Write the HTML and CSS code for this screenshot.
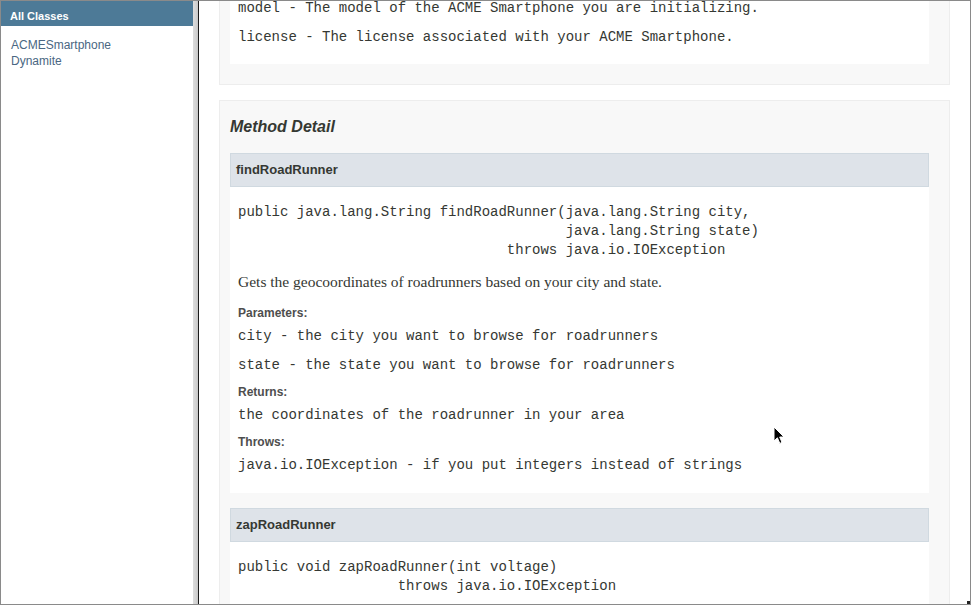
FILE: index.html
```html
<!DOCTYPE html>
<html lang="en">
<head>
<meta charset="utf-8">
<title>ACMESmartphone</title>
<link rel="stylesheet" href="styles.css">
</head>
<body>
<div class="window">
  <aside class="sidebar">
    <h1 class="bar">All Classes</h1>
    <ul class="classlist">
      <li><a href="#">ACMESmartphone</a></li>
      <li><a href="#">Dynamite</a></li>
    </ul>
  </aside>
  <div class="divider"></div>
  <main class="content">
    <section class="block block-cut">
      <div class="inner inner-cut">
        <dl class="params">
          <dd class="first">model - The model of the ACME Smartphone you are initializing.</dd>
          <dd>license - The license associated with your ACME Smartphone.</dd>
        </dl>
      </div>
    </section>
    <section class="block">
      <h3 class="section-title">Method Detail</h3>
      <div class="inner">
        <h4 class="member">findRoadRunner</h4>
        <pre class="sig">public java.lang.String findRoadRunner(java.lang.String city,
                                       java.lang.String state)
                                throws java.io.IOException</pre>
        <div class="desc">Gets the geocoordinates of roadrunners based on your city and state.</div>
        <dl class="params">
          <dt>Parameters:</dt>
          <dd>city - the city you want to browse for roadrunners</dd>
          <dd>state - the state you want to browse for roadrunners</dd>
          <dt>Returns:</dt>
          <dd>the coordinates of the roadrunner in your area</dd>
          <dt>Throws:</dt>
          <dd>java.io.IOException - if you put integers instead of strings</dd>
        </dl>
      </div>
      <div class="inner">
        <h4 class="member">zapRoadRunner</h4>
        <pre class="sig">public void zapRoadRunner(int voltage)
                   throws java.io.IOException</pre>
      </div>
    </section>
  </main>
  <svg class="cursor" width="13" height="19" viewBox="0 0 13 19" aria-hidden="true">
    <path d="M1 1 L1 15 L4.4 11.8 L6.8 17.4 L9 16.4 L6.7 11 L11 11 Z" fill="#000" stroke="#fff" stroke-width="1" stroke-linejoin="round"/>
  </svg>
  <span class="grip"></span>
</div>
</body>
</html>
```
FILE: styles.css
```css
* { box-sizing: border-box; }

html, body {
  margin: 0;
  padding: 0;
  background: #ffffff;
}

.window {
  position: relative;
  width: 971px;
  height: 605px;
  border: 1px solid #8a8a8a;
  display: flex;
  overflow: hidden;
  background: #ffffff;
  color: #353833;
  font-family: "Liberation Sans", Arial, sans-serif;
}

/* ---------- left frame ---------- */
.sidebar {
  width: 192px;
  flex: 0 0 192px;
  background: #ffffff;
}

.bar {
  margin: 0;
  height: 25px;
  padding: 5px 9px 0;
  background: #4d7a97;
  color: #ffffff;
  font-size: 11px;
  font-weight: bold;
  line-height: 20px;
}

.classlist {
  list-style: none;
  margin: 11px 0 0;
  padding: 0 0 0 10px;
  font-size: 12px;
  line-height: 16px;
}

.classlist a {
  color: #4a6782;
  text-decoration: none;
}

/* ---------- frame divider ---------- */
.divider {
  flex: 0 0 6px;
  background: linear-gradient(to right, #dcdcdc 0, #d2d2d2 3px, #c6c6c6 5px, #1c1c1c 5px, #1c1c1c 6px);
}

/* ---------- right frame ---------- */
.content {
  flex: 1;
  padding: 0 20px;
  overflow: hidden;
}

.block {
  background: #f8f8f8;
  border: 1px solid #ededed;
  padding: 0 20px 5px 10px;
  margin-bottom: 15px;
}

.block-cut {
  border-top: none;
}

.inner {
  background: #ffffff;
  padding: 0 0 9px 8px;
  margin-bottom: 15px;
}

.inner-cut {
  display: flow-root;
  padding-bottom: 8px;
}

.section-title {
  margin: 15px 0;
  font-size: 16px;
  font-style: italic;
  font-weight: bold;
  line-height: 22px;
  color: #353833;
}

.member {
  margin: 0 0 6px -8px;
  padding: 7px 5px;
  background: #dee3e9;
  border: 1px solid #d0d9e0;
  font-size: 13px;
  font-weight: bold;
  line-height: 18px;
  color: #353833;
}

.sig {
  margin: 16px 0 0;
  font-family: "Liberation Mono", "Courier New", monospace;
  font-size: 14px;
  line-height: 19px;
  color: #353833;
}

.desc {
  margin: 12px 0 0;
  font-family: "Liberation Serif", "Times New Roman", serif;
  font-size: 15.5px;
  line-height: 20px;
  color: #353833;
}

.params {
  margin: 0;
  padding-top: 5px;
}

.params dt {
  margin: 8px 0 0;
  font-size: 12px;
  font-weight: bold;
  line-height: 17px;
  color: #4e4e4e;
}

.params dd {
  margin: 4px 0 8px;
  font-family: "Liberation Mono", "Courier New", monospace;
  font-size: 14px;
  line-height: 21px;
  color: #353833;
}

.block-cut .params {
  padding-top: 0;
}

.params dd.first {
  margin-top: -3px;
}

/* ---------- overlays ---------- */
.cursor {
  position: absolute;
  left: 772px;
  top: 425px;
}

.grip {
  position: absolute;
  right: 0;
  bottom: 0;
  width: 3px;
  height: 3px;
  background: #222;
}
```
